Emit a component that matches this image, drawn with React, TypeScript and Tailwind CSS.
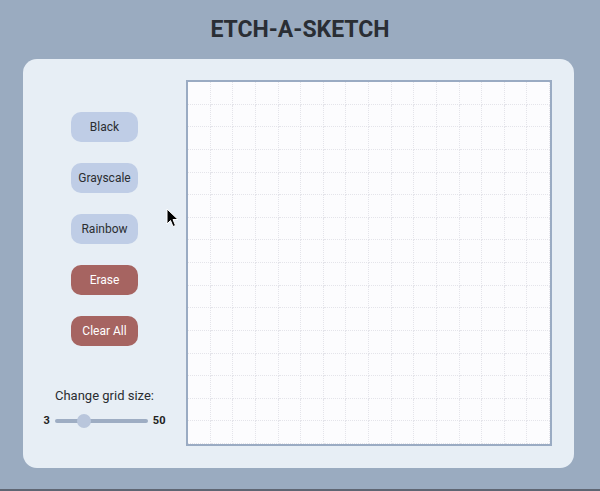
import React from "react";

const buttons = [
  { label: "Black", red: false },
  { label: "Grayscale", red: false },
  { label: "Rainbow", red: false },
  { label: "Erase", red: true },
  { label: "Clear All", red: true },
];

export default function App() {
  const cells = Array.from({ length: 256 });
  const value = 16;
  const pct = (value - 3) / 47;
  return (
    <div
      className="relative flex h-[491px] w-[600px] flex-col bg-[#9aabc0]"
      style={{ fontFamily: "Roboto, 'Liberation Sans', sans-serif" }}
    >
      <h1 className="pt-[16px] text-center text-[23px] font-bold leading-[28px] text-[#2a2e34]">
        ETCH-A-SKETCH
      </h1>
      <div className="ml-[23px] mt-[15px] flex h-[409px] w-[551px] rounded-[14px] bg-[#e7eef5] py-[21px] pr-[22px]">
        <div className="flex w-[163px] flex-col items-center">
          <div className="mt-[32px] flex flex-col items-center gap-[21px]">
            {buttons.map((b) => (
              <button
                key={b.label}
                className={
                  b.red
                    ? "h-[30px] w-[67px] rounded-[10px] bg-[#a66461] text-[12px] text-white"
                    : "h-[30px] w-[67px] rounded-[10px] bg-[#bfcde6] text-[12px] text-[#2b2d31]"
                }
              >
                {b.label}
              </button>
            ))}
          </div>
          <div className="mt-[41px] text-[13px] leading-[18px] text-[#2a2d31]">Change grid size:</div>
          <div className="mt-[8px] flex items-center gap-[5px]">
            <span className="text-[11px] font-bold text-[#222]">3</span>
            <div className="relative h-[4px] w-[93px] rounded-full bg-[#9eadc3]">
              <div
                className="absolute top-1/2 h-[14px] w-[14px] -translate-y-1/2 rounded-full bg-[#b9c6dc]"
                style={{ left: `${pct * 79}px` }}
              />
            </div>
            <span className="text-[11px] font-bold text-[#222]">50</span>
          </div>
        </div>
        <div className="h-[366px] w-[366px] border-2 border-[#9aabc3] bg-[#fcfcfe]">
          <div className="grid h-full w-full grid-cols-[repeat(16,1fr)] grid-rows-[repeat(16,1fr)]">
            {cells.map((_, i) => (
              <div key={i} className="border-b border-r border-dotted border-[#e4e4ea]" />
            ))}
          </div>
        </div>
      </div>
      <div className="mt-auto h-[2px] bg-[#5f6673]" />
      <svg
        className="absolute left-[166px] top-[208px]"
        width="13"
        height="21"
        viewBox="0 0 13 21"
      >
        <path
          d="M1 1 L1 16 L4.5 12.5 L7 18.5 L9.5 17.5 L7 11.5 L12 11.5 Z"
          fill="#000"
          stroke="#fff"
          strokeWidth="1"
          strokeLinejoin="round"
        />
      </svg>
    </div>
  );
}
